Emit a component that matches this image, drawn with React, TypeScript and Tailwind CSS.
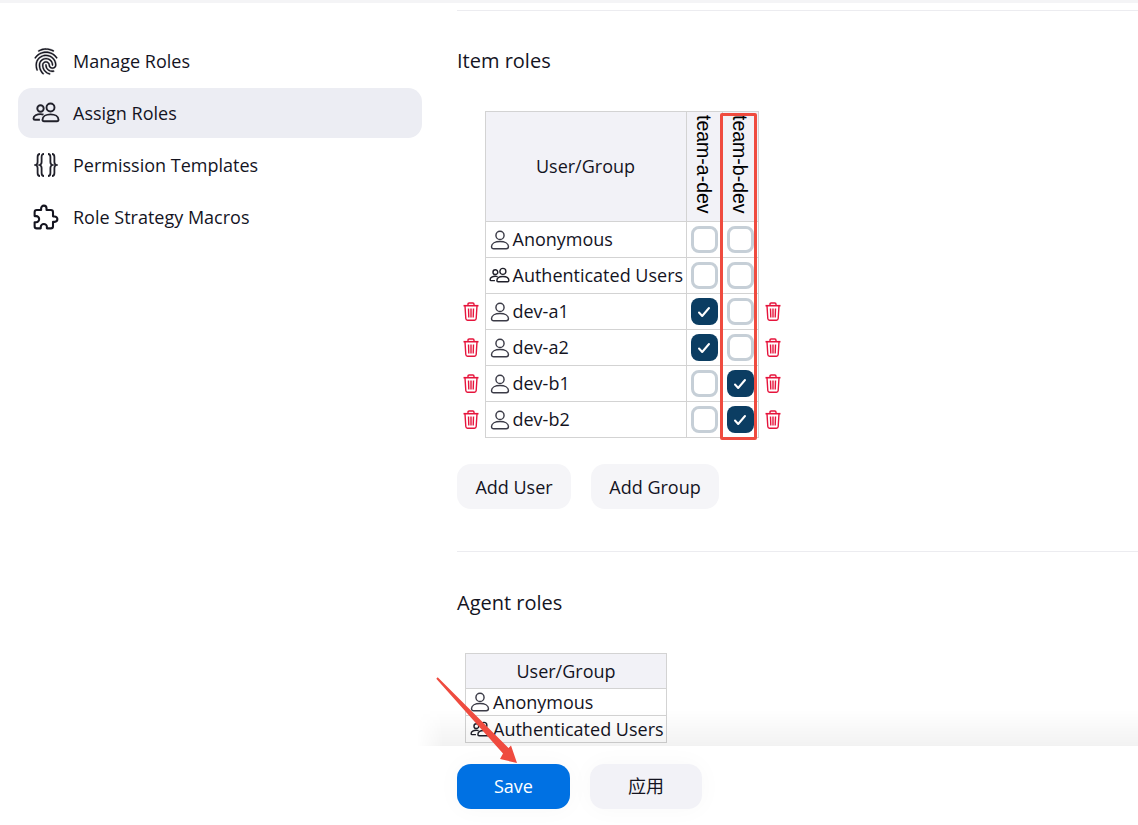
import { IoFingerPrintOutline, IoExtensionPuzzleOutline } from 'react-icons/io5';

const NAV_ITEMS = [
  { label: 'Manage Roles', icon: <IoFingerPrintOutline size={29} className="[&_path]:stroke-[6]" /> },
  { label: 'Assign Roles', icon: <PeopleIcon size={28} />, active: true },
  { label: 'Permission Templates', icon: <BracesIcon /> },
  { label: 'Role Strategy Macros', icon: <IoExtensionPuzzleOutline size={30} className="[&_path]:stroke-[38]" /> },
];

const ITEM_ROWS = [
  { name: 'Anonymous', a: false, b: false, del: false, icon: 'person' },
  { name: 'Authenticated Users', a: false, b: false, del: false, icon: 'people' },
  { name: 'dev-a1', a: true, b: false, del: true, icon: 'person' },
  { name: 'dev-a2', a: true, b: false, del: true, icon: 'person' },
  { name: 'dev-b1', a: false, b: true, del: true, icon: 'person' },
  { name: 'dev-b2', a: false, b: true, del: true, icon: 'person' },
];

function PersonIcon({ size = 20 }: { size?: number }) {
  return (
    <svg width={size} height={size} viewBox="0 0 20 20" fill="none" stroke="#3b3b47" strokeWidth="1.300" className="shrink-0">
      <circle cx="10" cy="5.800" r="3.700" />
      <path d="M2.300 16c0-3 3.500-4.600 7.700-4.600s7.700 1.600 7.700 4.600c0 1.300-.7 2-2 2H4.300c-1.300 0-2-.7-2-2z" />
    </svg>
  );
}

function PeopleIcon({ size = 20 }: { size?: number }) {
  return (
    <svg width={size} height={size} viewBox="0 0 28 28" fill="none" stroke="#20202a" strokeWidth="1.900" className="shrink-0">
      <circle cx="8.500" cy="9.500" r="3.200" />
      <circle cx="18.500" cy="8.500" r="4" />
      <path d="M10.500 20.800c0-3.400 3.600-5.400 8-5.400s8 2 8 5.400c0 1-.6 1.500-1.600 1.500H12.100c-1 0-1.600-.5-1.600-1.500z" />
      <path d="M11.500 15.600c-.8-.3-1.800-.5-3-.5-3.600 0-7 1.700-7 4.400 0 .9.500 1.300 1.400 1.300h5" />
    </svg>
  );
}

// small variant used inside the tables, lighter than the sidebar one
function SmallPeople() {
  return (
    <span className="flex w-[22px] shrink-0 justify-center text-[#3b3b47]">
      <PeopleIcon size={21} />
    </span>
  );
}

function BracesIcon() {
  return (
    <svg width="24" height="26" viewBox="0 0 24 26" fill="none" stroke="#20202a" strokeWidth="1.800" className="shrink-0">
      <path d="M6 2C4.200 2 3.600 3 3.600 5v5c0 1.700-.6 2.600-2.100 3 1.500.4 2.100 1.300 2.100 3v5c0 2 .6 3 2.400 3" />
      <path d="M10 2C8.200 2 7.600 3 7.600 5v5c0 1.700-.6 2.600-2.100 3 1.500.4 2.100 1.300 2.100 3v5c0 2 .6 3 2.400 3" />
      <path d="M14 2c1.800 0 2.400 1 2.400 3v5c0 1.700.6 2.600 2.100 3-1.500.4-2.100 1.300-2.100 3v5c0 2-.6 3-2.400 3" />
      <path d="M18 2c1.800 0 2.400 1 2.400 3v5c0 1.700.6 2.600 2.100 3-1.500.4-2.100 1.300-2.100 3v5c0 2-.6 3-2.400 3" />
    </svg>
  );
}

function TrashIcon() {
  return (
    <svg width="16" height="19" viewBox="0 0 16 19" fill="none" stroke="#e6143c" strokeWidth="1.400" className="block">
      <path d="M.5 3.700h15" strokeWidth="1.600" />
      <path d="M5 3.500V2.200c0-.7.4-1.200 1.100-1.200h3.800c.7 0 1.100.5 1.100 1.200v1.300" />
      <path d="M2 3.700l.8 12.800c.1 1 .7 1.700 1.700 1.700h7c1 0 1.600-.7 1.700-1.700L14 3.700" />
      <path d="M5.500 6.500l.3 9M8 6.500v9M10.500 6.500l-.3 9" />
    </svg>
  );
}

function CheckBox({ checked }: { checked: boolean }) {
  return checked ? (
    <span className="mx-auto flex h-[27px] w-[27px] items-center justify-center rounded-[8px] bg-[#0b3d62]">
      <svg width="14" height="12" viewBox="0 0 14 12" fill="none" stroke="white" strokeWidth="2" strokeLinecap="round" strokeLinejoin="round">
        <path d="M2 6.500 5.200 10 12 2" />
      </svg>
    </span>
  ) : (
    <span className="mx-auto block h-[27px] w-[27px] rounded-[8px] border-[3px] border-[#c6cfd7] bg-white" />
  );
}

const th = 'border border-[#d3d3d3] bg-[#f2f2f7] font-normal';
const td = 'border border-[#d3d3d3] p-0';

export default function App() {
  return (
    <div className="relative h-[825px] w-[1138px] overflow-hidden bg-white font-['Open_Sans','Noto_Sans_CJK_SC',sans-serif] text-[18px] text-[#14141f]">
      <div className="h-[3px] bg-[#f4f4f6]" />
      <div className="flex">
        {/* Sidebar */}
        <aside className="w-[457px] shrink-0 pl-[18px] pt-[33px]">
          <nav className="flex w-[404px] flex-col gap-[2px]">
            {NAV_ITEMS.map(item => (
              <div
                key={item.label}
                className={`flex h-[50px] items-center gap-[13px] rounded-[14px] pl-[14px] ${item.active ? 'bg-[#ecedf3]' : ''}`}
              >
                <span className="flex w-[28px] items-center justify-center">{item.icon}</span>
                <span>{item.label}</span>
              </div>
            ))}
          </nav>
        </aside>

        {/* Main */}
        <main className="min-w-0 flex-1">
          <div className="mt-[7px] h-px bg-[#ececf0]" />
          <h2 className="mt-[36px] text-[20px] font-normal leading-[28px]">Item roles</h2>

          <table className="mt-[36px] border-collapse leading-[24px]">
            <thead>
              <tr>
                <th className="w-[28px] p-0" />
                <th className={`${th} h-[110px] w-[201px]`}>
                  <span className="relative -top-px">User/Group</span>
                </th>
                {['team-a-dev', 'team-b-dev'].map(role => (
                  <th key={role} className={`${th} w-[36px] p-0 align-top`}>
                    <span className="mx-auto block pt-[3px] font-['Liberation_Sans',sans-serif] text-[19.500px] leading-[34px] text-black [writing-mode:vertical-rl]">
                      {role}
                    </span>
                  </th>
                ))}
                <th className="w-[28px] p-0" />
              </tr>
            </thead>
            <tbody>
              {ITEM_ROWS.map(row => (
                <tr key={row.name} className="h-[36px]">
                  <td className="p-0">
                    {row.del && <span className="ml-[6px] block"><TrashIcon /></span>}
                  </td>
                  <td className={`${td} pl-[3px] pr-[2px]`}>
                    <div className="flex items-center gap-[2px] whitespace-nowrap">
                      {row.icon === 'person' ? <PersonIcon size={22} /> : <SmallPeople />}
                      <span className="relative -top-px">{row.name}</span>
                    </div>
                  </td>
                  <td className={td}><CheckBox checked={row.a} /></td>
                  <td className={td}><CheckBox checked={row.b} /></td>
                  <td className="p-0">
                    {row.del && <span className="ml-[6px] block"><TrashIcon /></span>}
                  </td>
                </tr>
              ))}
            </tbody>
          </table>

          <div className="mt-[26px] flex gap-[20px]">
            <button className="h-[45px] w-[114px] rounded-[14px] bg-[#f5f5f8] pt-px">Add User</button>
            <button className="h-[45px] w-[128px] rounded-[14px] bg-[#f5f5f8] pt-px">Add Group</button>
          </div>

          <div className="mt-[42px] h-px bg-[#ececf0]" />
          <h2 className="mt-[37px] text-[20px] font-normal leading-[28px]">Agent roles</h2>

          <table className="ml-[8px] mt-[36px] border-collapse leading-[24px]">
            <thead>
              <tr>
                <th className={`${th} h-[35px] w-[201px]`}>User/Group</th>
              </tr>
            </thead>
            <tbody>
              <tr className="h-[27px]">
                <td className={`${td} pl-[3px] pr-[2px]`}>
                  <div className="flex items-center gap-[2px]">
                    <PersonIcon size={22} />
                    <span>Anonymous</span>
                  </div>
                </td>
              </tr>
              <tr className="h-[27px]">
                <td className={`${td} pl-[3px] pr-[2px]`}>
                  <div className="flex items-center gap-[2px] whitespace-nowrap">
                    <SmallPeople />
                    <span>Authenticated Users</span>
                  </div>
                </td>
              </tr>
            </tbody>
          </table>
        </main>
      </div>

      {/* Sticky save bar */}
      <div className="absolute bottom-[79px] left-[417px] right-0 h-[36px] bg-gradient-to-b from-black/0 to-black/[0.05] [mask-image:linear-gradient(to_right,transparent,black_26px)]" />
      <div className="absolute bottom-0 left-[417px] right-0 flex h-[79px] gap-[20px] bg-white pl-[40px] pt-[18px]">
        <button className="h-[45px] w-[113px] rounded-[14px] bg-[#0071e3] text-white shadow-[0_0_24px_rgba(0,0,0,0.03)]">Save</button>
        <button className="h-[45px] w-[112px] rounded-[14px] bg-[#f2f2f7] shadow-[0_0_24px_rgba(0,0,0,0.03)]">应用</button>
      </div>

      {/* Annotations */}
      <div className="absolute left-[720px] top-[113px] h-[327px] w-[37px] rounded-[2px] border-[3px] border-[#ef4b3f]" />
      <svg className="absolute left-[430px] top-[670px]" width="100" height="100" viewBox="0 0 100 100">
        <path d="M6.300 8.700 L7.700 7.300 L78.500 78 L81 75.500 L87 93 L70 89 L73 83.500 Z" fill="#ef4b3f" />
      </svg>
    </div>
  );
}
